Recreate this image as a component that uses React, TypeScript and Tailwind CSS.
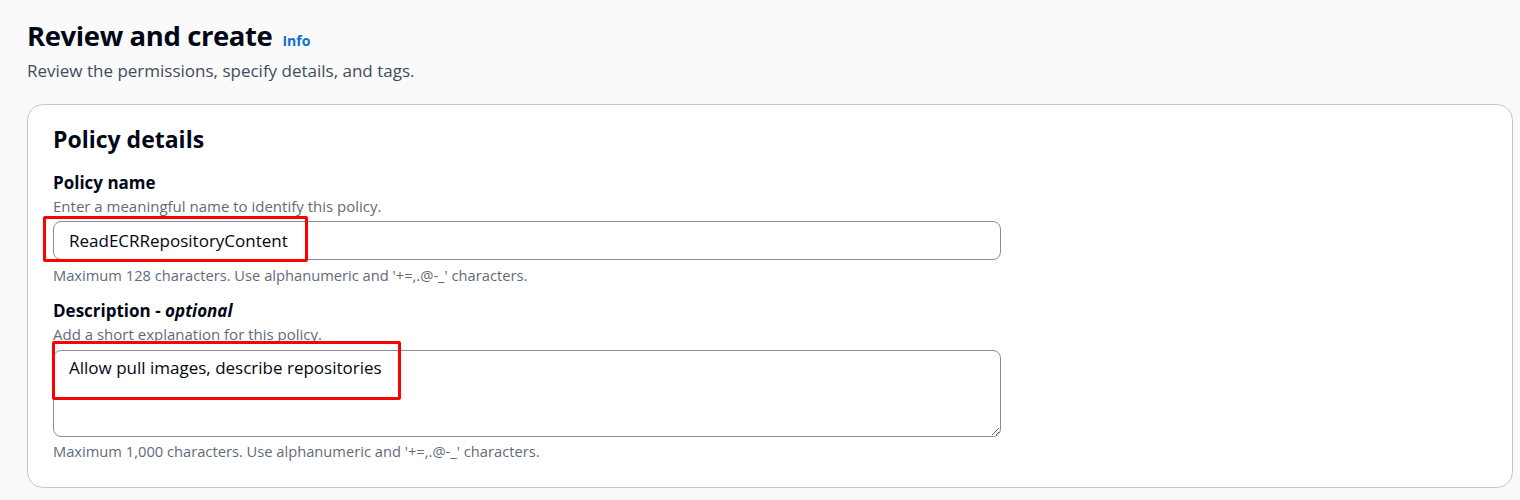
export default function App() {
  return (
    <div className="min-h-screen bg-[#fafafa] pl-[27px] pr-[7px] pt-[18px] font-['Open_Sans',sans-serif] text-[#000716]">
      <div className="flex items-baseline gap-[10px]">
        <h1 className="text-[27.5px] leading-[36px] font-bold tracking-[-0.4px]">Review and create</h1>
        <a className="text-[14px] font-bold text-[#0972d3]">Info</a>
      </div>
      <p className="mt-[6px] text-[17px] leading-[22px] text-[#414d5c]">
        Review the permissions, specify details, and tags.
      </p>

      <div className="mt-[22px] rounded-[16px] border border-[#c6c6cd] bg-white px-[25px] pt-[19px] pb-[26px]">
        <h2 className="text-[23px] leading-[30px] font-bold">Policy details</h2>

        <div className="mt-[18px]">
          <label className="block text-[17px] leading-[22px] font-bold">Policy name</label>
          <p className="mt-[2px] text-[15px] leading-[20px] text-[#5f6b7a]">
            Enter a meaningful name to identify this policy.
          </p>
          <div className="relative mt-[5px] w-[948px]">
            <input
              readOnly
              defaultValue="ReadECRRepositoryContent"
              className="block h-[39px] w-full rounded-[8px] border border-[#8c8c94] bg-white px-[15px] text-[17px] text-[#000716] outline-none"
            />
            <div className="pointer-events-none absolute left-[-10px] top-[-5px] h-[46px] w-[265px] rounded-[2px] border-[3px] border-[#ff0000]" />
          </div>
          <p className="mt-[5px] text-[14.7px] leading-[20px] text-[#5f6b7a]">
            Maximum 128 characters. Use alphanumeric and '+=,.@-_' characters.
          </p>
        </div>

        <div className="mt-[15px]">
          <label className="block text-[17px] leading-[22px] font-bold">
            Description - <i>optional</i>
          </label>
          <p className="mt-[2px] text-[15px] leading-[20px] text-[#5f6b7a]">
            Add a short explanation for this policy.
          </p>
          <div className="relative mt-[6px] w-[948px]">
            <textarea
              readOnly
              defaultValue="Allow pull images, describe repositories"
              className="block h-[87px] w-full rounded-[8px] border border-[#8c8c94] bg-white px-[15px] pt-[6px] text-[17px] leading-[22px] text-[#000716] outline-none"
            />
            <div className="pointer-events-none absolute left-[-1px] top-[-9px] h-[59px] w-[349px] rounded-[2px] border-[3px] border-[#ff0000]" />
          </div>
          <p className="mt-[4px] text-[14.7px] leading-[20px] text-[#5f6b7a]">
            Maximum 1,000 characters. Use alphanumeric and '+=,.@-_' characters.
          </p>
        </div>
      </div>
    </div>
  );
}
